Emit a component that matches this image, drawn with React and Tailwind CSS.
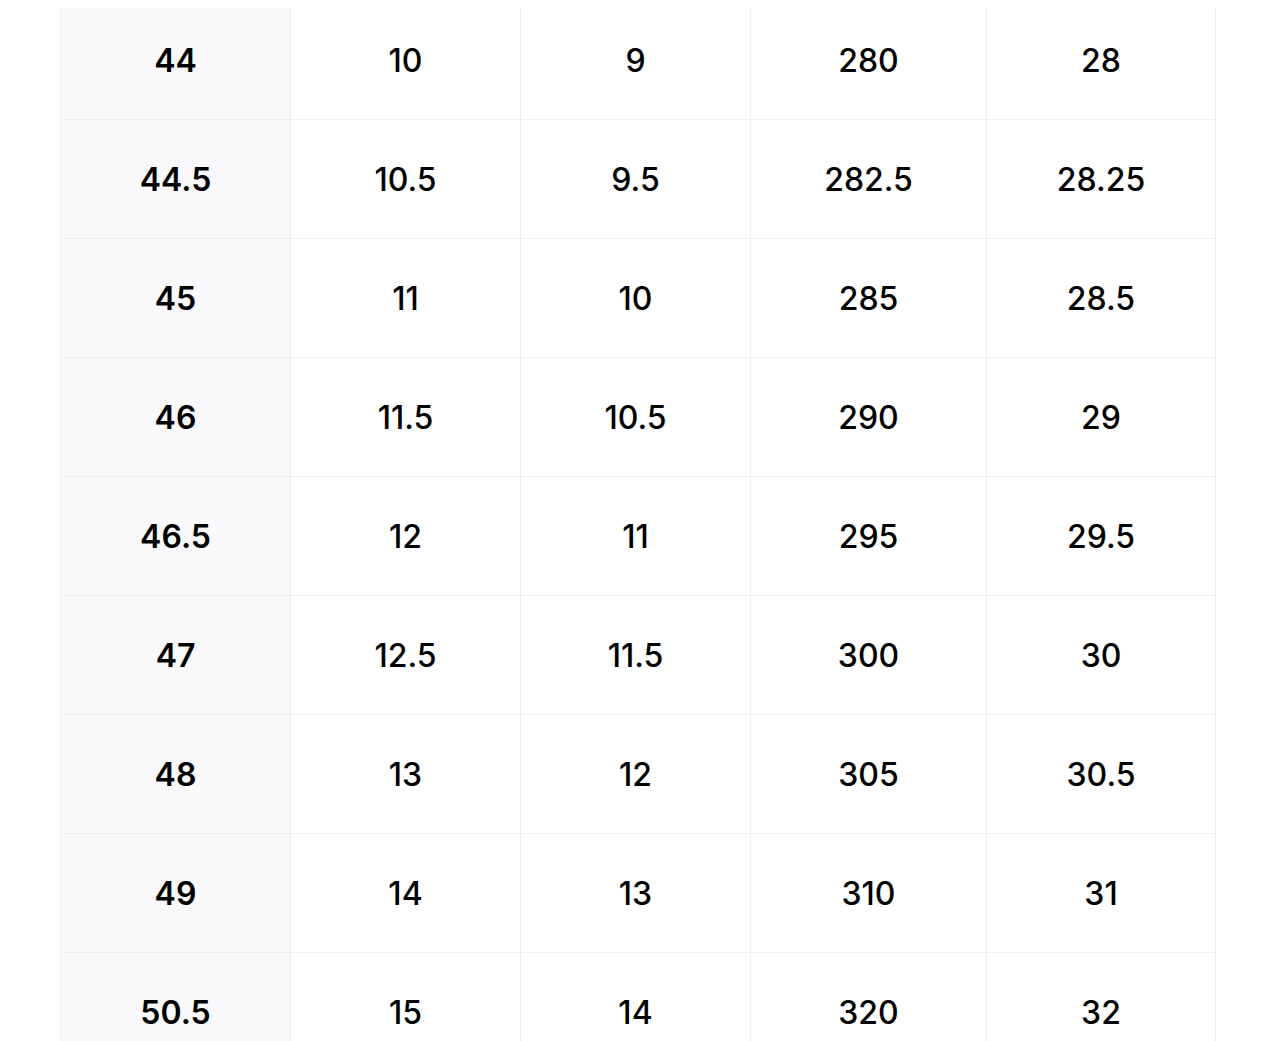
const rows = [
  ["44", "10", "9", "280", "28"],
  ["44.5", "10.5", "9.5", "282.5", "28.25"],
  ["45", "11", "10", "285", "28.5"],
  ["46", "11.5", "10.5", "290", "29"],
  ["46.5", "12", "11", "295", "29.5"],
  ["47", "12.5", "11.5", "300", "30"],
  ["48", "13", "12", "305", "30.5"],
  ["49", "14", "13", "310", "31"],
  ["50.5", "15", "14", "320", "32"],
];

export default function App() {
  return (
    <div className="min-h-screen bg-white pt-2 px-[60px] overflow-hidden font-['Inter',sans-serif] text-black">
      <div className="w-[1156px] border-x border-[#eeeeee]">
        {rows.map((row, i) => (
          <div
            key={i}
            className={`grid grid-cols-[230px_230px_230px_236px_1fr] border-[#eeeeee] ${i < rows.length - 1 ? "border-b" : ""}`}
          >
            {row.map((cell, j) => (
              <div
                key={j}
                className={`flex items-center justify-center text-[32px] ${i === 0 ? "h-[111px] pb-[5px]" : "h-[118px] pt-[2px]"} ${j === 0 ? "bg-[#f9f9fb] font-semibold" : "font-[450]"} ${j < 4 ? "border-r border-[#eeeeee]" : ""}`}
              >
                {cell}
              </div>
            ))}
          </div>
        ))}
      </div>
    </div>
  );
}
